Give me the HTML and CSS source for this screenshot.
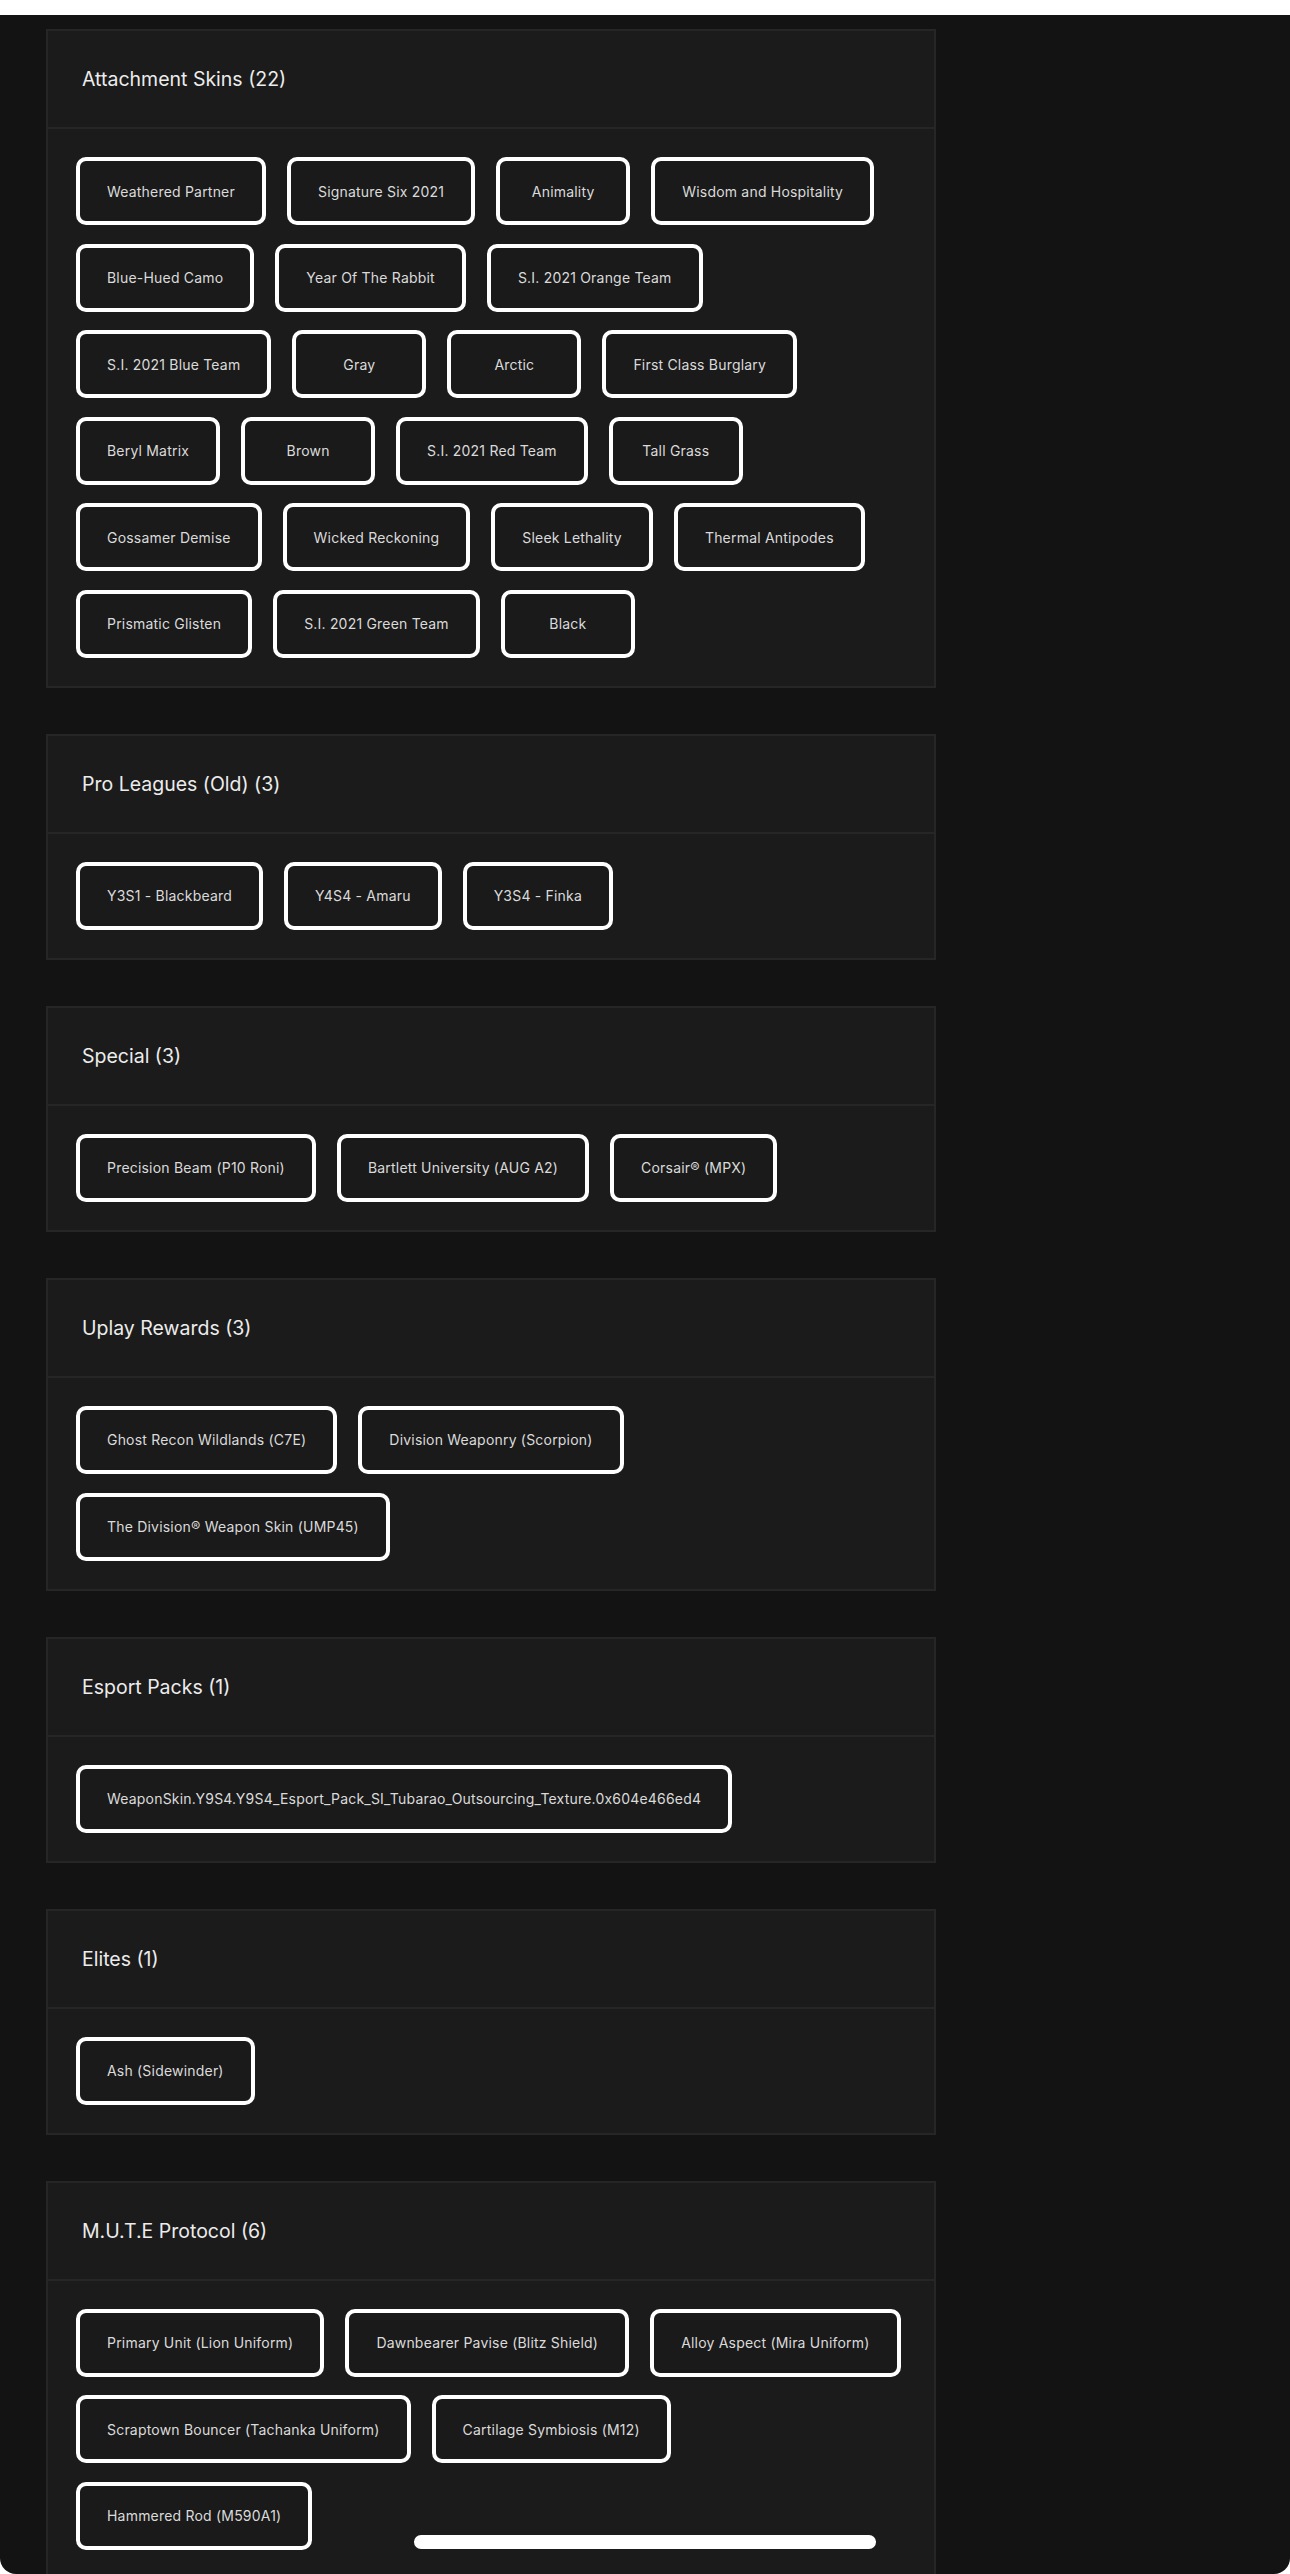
FILE: index.html
```html
<!DOCTYPE html>
<html lang="en">
<head>
<meta charset="utf-8">
<title>Skins</title>
<link rel="stylesheet" href="styles.css">
</head>
<body>
<div class="screen">
  <section class="card">
    <header class="card-head"><h2>Attachment Skins (22)</h2></header>
    <div class="card-body">
      <div class="row"><span class="chip">Weathered Partner</span><span class="chip">Signature Six 2021</span><span class="chip">Animality</span><span class="chip">Wisdom and Hospitality</span></div>
      <div class="row"><span class="chip">Blue-Hued Camo</span><span class="chip">Year Of The Rabbit</span><span class="chip">S.I. 2021 Orange Team</span></div>
      <div class="row"><span class="chip">S.I. 2021 Blue Team</span><span class="chip">Gray</span><span class="chip">Arctic</span><span class="chip">First Class Burglary</span></div>
      <div class="row"><span class="chip">Beryl Matrix</span><span class="chip">Brown</span><span class="chip">S.I. 2021 Red Team</span><span class="chip">Tall Grass</span></div>
      <div class="row"><span class="chip">Gossamer Demise</span><span class="chip">Wicked Reckoning</span><span class="chip">Sleek Lethality</span><span class="chip">Thermal Antipodes</span></div>
      <div class="row"><span class="chip">Prismatic Glisten</span><span class="chip">S.I. 2021 Green Team</span><span class="chip">Black</span></div>
    </div>
  </section>

  <section class="card">
    <header class="card-head"><h2>Pro Leagues (Old) (3)</h2></header>
    <div class="card-body">
      <div class="row"><span class="chip">Y3S1 - Blackbeard</span><span class="chip">Y4S4 - Amaru</span><span class="chip">Y3S4 - Finka</span></div>
    </div>
  </section>

  <section class="card">
    <header class="card-head"><h2>Special (3)</h2></header>
    <div class="card-body">
      <div class="row"><span class="chip">Precision Beam (P10 Roni)</span><span class="chip">Bartlett University (AUG A2)</span><span class="chip">Corsair® (MPX)</span></div>
    </div>
  </section>

  <section class="card">
    <header class="card-head"><h2>Uplay Rewards (3)</h2></header>
    <div class="card-body">
      <div class="row"><span class="chip">Ghost Recon Wildlands (C7E)</span><span class="chip">Division Weaponry (Scorpion)</span></div>
      <div class="row"><span class="chip">The Division® Weapon Skin (UMP45)</span></div>
    </div>
  </section>

  <section class="card">
    <header class="card-head"><h2>Esport Packs (1)</h2></header>
    <div class="card-body">
      <div class="row"><span class="chip">WeaponSkin.Y9S4.Y9S4_Esport_Pack_SI_Tubarao_Outsourcing_Texture.0x604e466ed4</span></div>
    </div>
  </section>

  <section class="card">
    <header class="card-head"><h2>Elites (1)</h2></header>
    <div class="card-body">
      <div class="row"><span class="chip">Ash (Sidewinder)</span></div>
    </div>
  </section>

  <section class="card">
    <header class="card-head"><h2>M.U.T.E Protocol (6)</h2></header>
    <div class="card-body">
      <div class="row"><span class="chip">Primary Unit (Lion Uniform)</span><span class="chip">Dawnbearer Pavise (Blitz Shield)</span><span class="chip">Alloy Aspect (Mira Uniform)</span></div>
      <div class="row"><span class="chip">Scraptown Bouncer (Tachanka Uniform)</span><span class="chip">Cartilage Symbiosis (M12)</span></div>
      <div class="row"><span class="chip">Hammered Rod (M590A1)</span></div>
    </div>
  </section>

  <div class="home-indicator"></div>
</div>
</body>
</html>
```

FILE: styles.css
```css
html, body {
  margin: 0;
  padding: 0;
  background: #ffffff;
}

body {
  font-family: Inter, "Noto Sans", "Liberation Sans", sans-serif;
}

.screen {
  position: relative;
  margin-top: 15px;
  height: 2559px;
  box-sizing: border-box;
  padding: 14px 0 0 46px;
  background: #131313;
  border-radius: 0 0 16px 16px;
  overflow: hidden;
  display: flex;
  flex-direction: column;
  gap: 46px;
}

.card {
  width: 890px;
  box-sizing: border-box;
  flex-shrink: 0;
  background: #1b1b1b;
  border: 2px solid #262626;
}

.card-head {
  height: 96px;
  display: flex;
  align-items: center;
  padding: 0 34px;
  border-bottom: 2px solid #262626;
}

.card-head h2 {
  margin: 0;
  font-size: 19.5px;
  font-weight: 400;
  color: #ececec;
  letter-spacing: 0;
}

.card-body {
  padding: 28px;
  display: flex;
  flex-direction: column;
  gap: 18.6px;
}

.row {
  display: flex;
  gap: 21px;
}

.chip {
  height: 68px;
  min-width: 134px;
  box-sizing: border-box;
  display: inline-flex;
  align-items: center;
  justify-content: center;
  padding: 0 27px;
  border: 4px solid #ffffff;
  border-radius: 10px;
  background: #1a1a1a;
  color: #dadada;
  font-size: 14px;
  letter-spacing: 0.2px;
  white-space: nowrap;
}

.home-indicator {
  position: absolute;
  left: 414px;
  top: 2520px;
  width: 462px;
  height: 14px;
  border-radius: 7px;
  background: #ffffff;
}
```
